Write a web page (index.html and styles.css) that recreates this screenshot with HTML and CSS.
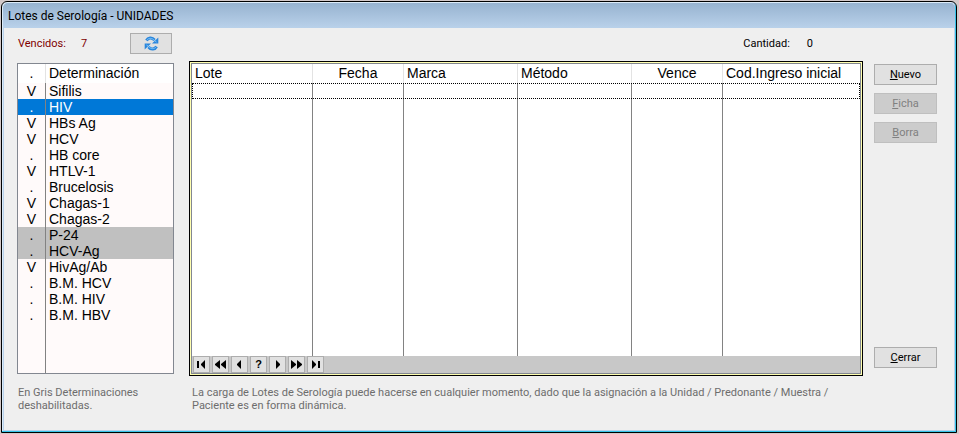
FILE: index.html
```html
<!DOCTYPE html>
<html lang="es">
<head>
<meta charset="utf-8">
<title>Lotes de Serología - UNIDADES</title>
<link rel="stylesheet" href="styles.css">
</head>
<body>
<main class="window">
  <header class="titlebar"><h1>Lotes de Serología - UNIDADES</h1></header>
  <div class="content">
    <div class="expired">
      <span class="expired-label">Vencidos:</span>
      <span class="expired-count">7</span>
      <button class="btn refresh" type="button" aria-label="Actualizar">
        <svg viewBox="0 0 15 15" width="15" height="15" aria-hidden="true">
          <path d="M2.500 4.500C4 1.500 8 .8 10.500 4" fill="none" stroke="#2b86dc" stroke-width="3"/>
          <path d="M14.300 1.500v6H8z" fill="#2b86dc"/>
          <path d="M3 4C4.500 2 8 1.500 10.500 4.500L12.500 6" fill="none" stroke="#7cc6fa"/>
          <path d="M12.500 10.500C11 13.500 7 14.200 4.500 11" fill="none" stroke="#2b86dc" stroke-width="3"/>
          <path d="M.7 13.500v-6H7z" fill="#2b86dc"/>
          <path d="M12 11C10.500 13 7 13.500 4.500 10.500L2.500 9" fill="none" stroke="#7cc6fa"/>
        </svg>
      </button>
    </div>
    <div class="quantity"><span>Cantidad:</span><span>0</span></div>

    <div class="tests">
      <table class="grid">
        <colgroup><col class="c-mark"><col></colgroup>
        <thead><tr><th class="center">.</th><th>Determinación</th></tr></thead>
        <tbody>
          <tr><td>V</td><td>Sifilis</td></tr>
          <tr class="selected"><td>.</td><td>HIV</td></tr>
          <tr><td>V</td><td>HBs Ag</td></tr>
          <tr><td>V</td><td>HCV</td></tr>
          <tr><td>.</td><td>HB core</td></tr>
          <tr><td>V</td><td>HTLV-1</td></tr>
          <tr><td>.</td><td>Brucelosis</td></tr>
          <tr><td>V</td><td>Chagas-1</td></tr>
          <tr><td>V</td><td>Chagas-2</td></tr>
          <tr class="off"><td>.</td><td>P-24</td></tr>
          <tr class="off"><td>.</td><td>HCV-Ag</td></tr>
          <tr><td>V</td><td>HivAg/Ab</td></tr>
          <tr><td>.</td><td>B.M. HCV</td></tr>
          <tr><td>.</td><td>B.M. HIV</td></tr>
          <tr><td>.</td><td>B.M. HBV</td></tr>
          <tr class="rest"><td></td><td></td></tr>
        </tbody>
      </table>
    </div>

    <div class="lots">
      <div class="lots-inner">
        <table class="grid">
          <colgroup><col class="c-lot"><col class="c-date"><col class="c-text"><col class="c-text"><col class="c-date"><col></colgroup>
          <thead><tr><th>Lote</th><th class="center">Fecha</th><th>Marca</th><th>Método</th><th class="center">Vence</th><th>Cod.Ingreso inicial</th></tr></thead>
          <tbody>
            <tr class="focus"><td></td><td></td><td></td><td></td><td></td><td></td></tr>
            <tr class="rest"><td></td><td></td><td></td><td></td><td></td><td></td></tr>
          </tbody>
        </table>
        <nav class="pager">
          <button type="button" aria-label="Primero"><svg viewBox="0 0 13 9" width="13" height="9"><path d="M2 1h2v7H2zM10 0v9L6 5V4z"/></svg></button>
          <button type="button" aria-label="Página anterior"><svg viewBox="0 0 13 9" width="13" height="9"><path d="M6 0v9L1 5V4zM12 0v9L7 5V4z"/></svg></button>
          <button type="button" aria-label="Anterior"><svg viewBox="0 0 13 9" width="13" height="9"><path d="M8 0v9L4 5V4z"/></svg></button>
          <button type="button">?</button>
          <button type="button" aria-label="Siguiente"><svg viewBox="0 0 13 9" width="13" height="9"><path d="M5 0v9l4-4V4z"/></svg></button>
          <button type="button" aria-label="Página siguiente"><svg viewBox="0 0 13 9" width="13" height="9"><path d="M1 0v9l5-4V4zM7 0v9l5-4V4z"/></svg></button>
          <button type="button" aria-label="Último"><svg viewBox="0 0 13 9" width="13" height="9"><path d="M3 0v9l4-4V4zM9 1h2v7H9z"/></svg></button>
        </nav>
      </div>
    </div>

    <div class="actions">
      <button class="btn" type="button"><u>N</u>uevo</button>
      <button class="btn" type="button" disabled><u>F</u>icha</button>
      <button class="btn" type="button" disabled><u>B</u>orra</button>
      <button class="btn close" type="button"><u>C</u>errar</button>
    </div>

    <p class="note">En Gris Determinaciones deshabilitadas.</p>
    <p class="note">La carga de Lotes de Serología puede hacerse en cualquier momento, dado que la asignación a la Unidad / Predonante / Muestra / Paciente es en forma dinámica.</p>
  </div>
</main>
</body>
</html>
```
FILE: styles.css
```css
* { box-sizing: border-box; }

body {
  margin: 0;
  min-height: 100vh;
  padding: 1px 2px 1px 1px;
  display: flex;
  background: #d3c9c9;
  font: 11px/13px Roboto, "Liberation Sans", sans-serif;
  color: #000;
}

.window {
  flex: 1;
  display: flex;
  flex-direction: column;
  border: 1px solid #000;
  border-radius: 6px 6px 0 0;
  background: #efefef;
  box-shadow: inset -1px -1px #35c3e8, inset 1px 1px #dcebf8, inset -2px -2px #b9d1ea, inset 2px 2px #b9d1ea;
}

.titlebar {
  height: 25px;
  margin: 1px 1px 0;
  padding: 0 5px;
  border-radius: 5px 5px 0 0;
  background: linear-gradient(#97b3d0, #b9d1ea);
}

h1 {
  margin: 0;
  font: 12px/26px Roboto, "Liberation Sans", sans-serif;
}

.content {
  flex: 1;
  display: grid;
  grid-template-columns: 157px 1fr 63px;
  grid-template-rows: 35px 1fr 58px;
  padding: 0 19px 0 15px;
}

.expired, .quantity {
  display: flex;
  padding-top: 5px;
  line-height: 22px;
}

.expired { color: #800000; }
.expired-label { width: 64px; padding-left: 1px; }
.expired-count { width: 49px; }

.quantity {
  grid-column: 2 / 4;
  justify-content: flex-end;
  gap: 17px;
  padding-right: 124px;
}

.btn {
  height: 21px;
  padding: 0;
  border: 1px solid #adadad;
  background: #e1e1e1;
  font: inherit;
  color: #000;
}

.btn:disabled {
  border-color: #bfbfbf;
  background: #ccc;
  color: #808080;
}

.refresh {
  width: 42px;
  display: flex;
  align-items: center;
  justify-content: center;
}

.tests {
  display: flex;
  border: 1px solid #828790;
  background: #fffafa;
}

.lots {
  display: flex;
  margin: -2px 11px -2px 15px;
  border: 1px solid #000;
  padding: 1px;
  background: #ffffb0;
}

.lots-inner {
  flex: 1;
  display: flex;
  flex-direction: column;
  border: 1px solid #828790;
  background: #fff;
}

.grid {
  flex: 1;
  width: 100%;
  table-layout: fixed;
  border-collapse: separate;
  border-spacing: 0;
  font: 14px/16px "Liberation Sans", Arial, sans-serif;
}

.c-mark { width: 28px; }
.c-lot { width: 121px; }
.c-date { width: 91px; }
.c-text { width: 114px; }

th, td {
  height: 16px;
  padding: 0 0 0 3px;
  border-right: 1px solid #828282;
  text-align: left;
  font-weight: normal;
  white-space: nowrap;
}

th {
  height: 19px;
  border-color: #e3e3e3;
  background: #fff;
  line-height: 18px;
  vertical-align: top;
}

th:last-child, td:last-child { border-right: 0; }
.center, .tests td:first-child { padding: 0; text-align: center; }
.rest td { height: auto; }

.selected td { background: #0078d7; color: #fff; }
.off td { background: #c0c0c0; }
.focus { outline: 1px dotted #000; outline-offset: -1px; }

.pager {
  height: 17px;
  display: flex;
  gap: 2px;
  padding: 0 1px;
  background: #c8c8c8;
}

.pager button {
  width: 17px;
  height: 17px;
  padding: 0;
  display: flex;
  align-items: center;
  justify-content: center;
  border: 1px solid #adadad;
  background: #e1e1e1;
  font: bold 11px/13px "Liberation Sans", sans-serif;
  color: #000;
}

.actions {
  display: flex;
  flex-direction: column;
  gap: 8px;
  padding: 1px 0 6px;
}

.close { margin-top: auto; }

.note {
  margin: 0;
  padding: 12px 0 0 1px;
  color: #6d6d6d;
}

.note + .note {
  grid-column: 2 / 4;
  padding-left: 18px;
  padding-right: 90px;
}
```
